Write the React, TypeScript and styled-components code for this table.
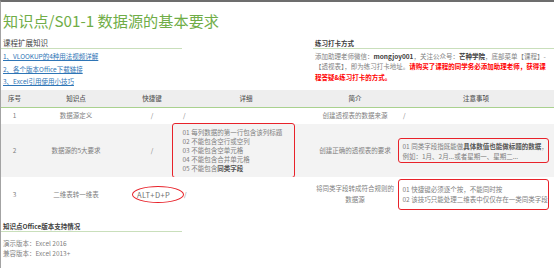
import { FC } from 'react';
import styled, { createGlobalStyle } from 'styled-components';

const GlobalStyle = createGlobalStyle`
  body {
    margin: 0;
    background: #ffffff;
    font-family: 'Noto Sans CJK SC', 'Noto Sans', sans-serif;
  }
`;

const Page = styled.div`
  width: 554px;
  height: 268px;
  box-sizing: border-box;
  border-top: 2px solid #6d6d6d;
  border-left: 1px solid #a3a3a3;
  overflow: hidden;
  color: #7f7f7f;
  font-size: 6.5px;
`;

const Title = styled.h1`
  margin: 0;
  padding: 8px 0 0 2px;
  font-size: 15.2px;
  line-height: 20px;
  font-weight: 400;
  color: #70ad47;
  white-space: nowrap;
`;

const TopRow = styled.div`
  display: flex;
  justify-content: space-between;
  margin-top: 8px;
`;

const Column = styled.div<{ $width: number }>`
  width: ${(p) => p.$width}px;
`;

const SectionHead = styled.div<{ $bold?: boolean; $size?: number }>`
  padding-left: 2px;
  line-height: 10px;
  font-size: ${(p) => p.$size ?? 6.5}px;
  font-weight: ${(p) => (p.$bold ? 700 : 400)};
  color: #404040;
  border-bottom: 1px solid #c9dfbb;
  white-space: nowrap;
`;

const LinkList = styled.div`
  margin-top: 1px;
  padding-left: 2px;
`;

const CourseLink = styled.a`
  display: block;
  line-height: 12.5px;
  color: #2e75b6;
  text-decoration: underline;
  white-space: nowrap;
`;

const Notice = styled.p`
  margin: 2px 0 0;
  padding-left: 2px;
  line-height: 10.3px;
  white-space: nowrap;

  b {
    color: #404040;
  }

  .red {
    color: #ff0000;
    font-weight: 700;
  }
`;

const Table = styled.table`
  width: 100%;
  margin-top: 2px;
  border-collapse: collapse;
  table-layout: fixed;
`;

const HeadCell = styled.th`
  height: 17px;
  padding: 0;
  background: #eeeeee;
  border-bottom: 1px solid #a9d18e;
  color: #595959;
  font-weight: 500;
  font-size: 6.5px;
  text-align: center;
`;

const Row = styled.tr<{ $height: number; $shaded?: boolean }>`
  height: ${(p) => p.$height}px;
  background: ${(p) => (p.$shaded ? '#f3f3f3' : '#ffffff')};
`;

const Cell = styled.td<{ $align?: 'left' | 'center'; $pad?: number }>`
  padding: 0 0 0 ${(p) => p.$pad ?? 0}px;
  text-align: ${(p) => p.$align ?? 'center'};
  vertical-align: middle;
  white-space: nowrap;
  line-height: 11px;
`;

const MarkBox = styled.div<{ $width: number; $shift: number; $line: number; $padY: number }>`
  box-sizing: border-box;
  width: ${(p) => p.$width}px;
  margin: -1px 0 -1px ${(p) => p.$shift}px;
  padding: ${(p) => p.$padY}px 0 ${(p) => p.$padY}px ${(p) => (p.$shift < -6 ? 9.5 : 3.5)}px;
  border: 1.5px solid #e8222a;
  border-radius: 3px;
  line-height: ${(p) => p.$line}px;
  text-align: left;

  b {
    color: #555555;
  }
`;

const Shortcut = styled.span`
  display: inline-flex;
  align-items: center;
  box-sizing: border-box;
  width: 52px;
  height: 17px;
  margin-left: 8px;
  padding-left: 4px;
  border: 1.5px solid #e8222a;
  border-radius: 50%;
  font-size: 7.5px;
  letter-spacing: 0.4px;
  color: #6f6f6f;
`;

const Footer = styled.div`
  width: 181px;
  margin-top: 10px;
`;

const VersionList = styled.div`
  margin-top: 7px;
  padding-left: 2px;
  line-height: 9.5px;
`;

const App: FC = () => {
  return (
    <>
      <GlobalStyle />
      <Page>
        <Title>知识点/S01-1 数据源的基本要求</Title>
        <TopRow>
          <Column $width={181}>
            <SectionHead $size={7.5}>课程扩展知识</SectionHead>
            <LinkList>
              <CourseLink>1、VLOOKUP的4种用法视频详解</CourseLink>
              <CourseLink>2、各个版本Office下载链接</CourseLink>
              <CourseLink>3、Excel引用使用小技巧</CourseLink>
            </LinkList>
          </Column>
          <Column $width={241}>
            <SectionHead $bold>练习打卡方式</SectionHead>
            <Notice>
              添加助理老师微信：<b>mongjoy001</b>，关注公众号：<b>芒种学院</b>，底部菜单【课程】-
              <br />
              【透视表】，即为练习打卡地址。
              <span className="red">请购买了课程的同学务必添加助理老师，获得课</span>
              <br />
              <span className="red">程答疑&amp;练习打卡的方式。</span>
            </Notice>
          </Column>
        </TopRow>

        <Table>
          <colgroup>
            <col style={{ width: 27 }} />
            <col style={{ width: 96 }} />
            <col style={{ width: 56 }} />
            <col style={{ width: 132 }} />
            <col style={{ width: 86 }} />
            <col style={{ width: 156 }} />
          </colgroup>
          <thead>
            <tr>
              <HeadCell>序号</HeadCell>
              <HeadCell>知识点</HeadCell>
              <HeadCell>快捷键</HeadCell>
              <HeadCell>详细</HeadCell>
              <HeadCell>简介</HeadCell>
              <HeadCell>注意事项</HeadCell>
            </tr>
          </thead>
          <tbody>
            <Row $height={17}>
              <Cell>1</Cell>
              <Cell>数据源定义</Cell>
              <Cell>/</Cell>
              <Cell $align="left" $pad={3}>/</Cell>
              <Cell>创建透视表的数据来源</Cell>
              <Cell $align="left" $pad={5}>/</Cell>
            </Row>
            <Row $height={53} $shaded>
              <Cell>2</Cell>
              <Cell>数据源的5大要求</Cell>
              <Cell>/</Cell>
              <Cell $align="left" $pad={3}>
                <MarkBox $width={123} $shift={-11} $line={9.2} $padY={3.5}>
                  01 每列数据的第一行包含该列标题
                  <br />
                  02 不能包含空行或空列
                  <br />
                  03 不能包含空单元格
                  <br />
                  04 不能包含合并单元格
                  <br />
                  05 不能包含<b>同类字段</b>
                </MarkBox>
              </Cell>
              <Cell>创建正确的透视表的要求</Cell>
              <Cell $align="left">
                <MarkBox $width={151} $shift={0} $line={10} $padY={1.5}>
                  01 同类字段指既能做<b>具体数值也能做标题的数据</b>，
                  <br />
                  例如：1月、2月...或者星期一、星期二...
                </MarkBox>
              </Cell>
            </Row>
            <Row $height={34}>
              <Cell>3</Cell>
              <Cell>二维表转一维表</Cell>
              <Cell>
                <Shortcut>ALT+D+P</Shortcut>
              </Cell>
              <Cell $align="left" $pad={4}>/</Cell>
              <Cell>
                将同类字段转成符合规则的
                <br />
                数据源
              </Cell>
              <Cell $align="left">
                <MarkBox $width={151} $shift={0} $line={10.5} $padY={4}>
                  01 快捷键必须逐个按，不能同时按
                  <br />
                  02 该技巧只能处理二维表中仅仅存在一类同类字段
                </MarkBox>
              </Cell>
            </Row>
          </tbody>
        </Table>

        <Footer>
          <SectionHead $bold>知识点Office版本支持情况</SectionHead>
          <VersionList>
            演示版本：Excel 2016
            <br />
            兼容版本：Excel 2013+
          </VersionList>
        </Footer>
      </Page>
    </>
  );
};

export default App;
